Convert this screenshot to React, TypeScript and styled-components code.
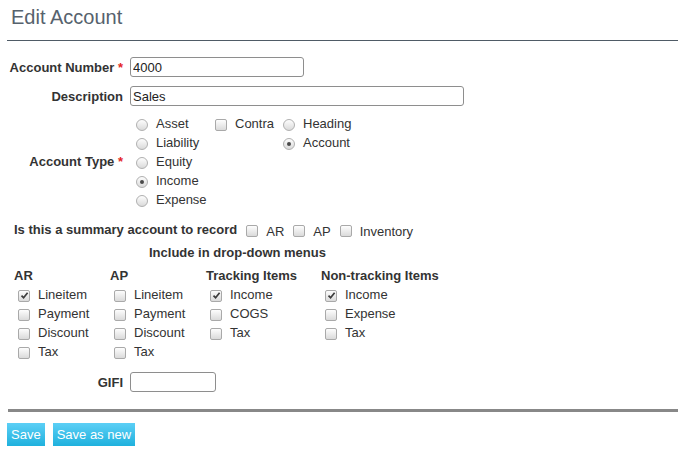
import React from "react";
import styled, { createGlobalStyle, css } from "styled-components";

const GlobalStyle = createGlobalStyle`
  body {
    margin: 0;
    font-family: "Liberation Sans", Arial, sans-serif;
    font-size: 13px;
    color: #333;
    background: #fff;
  }
`;

const Page = styled.div`
  width: 678px;
`;

const Header = styled.h1`
  box-sizing: border-box;
  height: 41px;
  margin: 0 0 0 7px;
  padding: 5px 0 0 4px;
  font-size: 20px;
  line-height: 24px;
  font-weight: normal;
  color: #56626d;
  border-bottom: 1px solid #4f5b66;
`;

const Form = styled.form`
  padding-top: 16px;
`;

const FieldRow = styled.div<{ $gap: number }>`
  display: grid;
  grid-template-columns: 123px auto;
  column-gap: 7px;
  align-items: center;
  margin-top: ${(p) => p.$gap}px;
`;

const Label = styled.label`
  font-weight: bold;
  text-align: right;
  white-space: nowrap;
`;

const Required = styled.span`
  color: #e4261f;
`;

const TextInput = styled.input<{ $width: number }>`
  box-sizing: border-box;
  width: ${(p) => p.$width}px;
  height: 20px;
  margin: 0;
  padding: 0 2px;
  border: 1px solid #8e8e8e;
  border-radius: 3px;
  font-family: inherit;
  font-size: 13px;
  color: #222;
  outline: none;
`;

const TypeGrid = styled.div`
  display: flex;
  align-items: flex-start;
`;

const TypeColumn = styled.div<{ $width: number; $indent: number }>`
  display: flex;
  flex-direction: column;
  width: ${(p) => p.$width}px;
  padding-left: ${(p) => p.$indent}px;
  box-sizing: border-box;
`;

const Option = styled.label<{ $drop?: boolean }>`
  display: flex;
  align-items: center;
  gap: 8px;
  height: 19px;
  white-space: nowrap;
  ${(p) =>
    p.$drop &&
    css`
      & > span:last-child {
        padding-top: 3px;
      }
    `}
`;

const control = css`
  box-sizing: border-box;
  flex: none;
  width: 12px;
  height: 12px;
  margin-top: 2px;
  border: 1px solid #b0b0b0;
  background: linear-gradient(#fdfdfd, #dadada);
  display: flex;
  align-items: center;
  justify-content: center;
`;

const Radio = styled.span<{ $checked?: boolean }>`
  ${control}
  border-radius: 50%;
  &::after {
    content: "";
    display: ${(p) => (p.$checked ? "block" : "none")};
    width: 4px;
    height: 4px;
    border-radius: 50%;
    background: #4a4a4a;
  }
`;

const Box = styled.span`
  ${control}
  border-radius: 2px;
  border-color: #a9a9a9;
`;

const Check = ({ checked }: { checked?: boolean }) => (
  <Box>
    {checked && (
      <svg width="9" height="9" viewBox="0 0 9 9">
        <path d="M1.5 4.6 L3.6 6.8 L7.6 1.8" fill="none" stroke="#3c3c3c" strokeWidth="1.7" />
      </svg>
    )}
  </Box>
);

const SummaryRow = styled.div`
  display: flex;
  align-items: center;
  height: 19px;
  margin: 4px 0 0 14px;
  gap: 9px;
`;

const Strong = styled.span`
  font-weight: bold;
`;

const Caption = styled.div`
  margin: 4px 0 0 149px;
  line-height: 19px;
  font-weight: bold;
`;

const MenuGrid = styled.div`
  display: grid;
  grid-template-columns: 96px 96px 115px auto;
  margin: 4px 0 0 14px;
`;

const MenuColumn = styled.div`
  display: flex;
  flex-direction: column;
`;

const MenuHead = styled.div`
  font-weight: bold;
  line-height: 19px;
`;

const MenuItems = styled.div`
  padding-left: 4px;
`;

const Rule = styled.hr`
  height: 3px;
  margin: 17px 0 0 8px;
  border: none;
  background: #888;
`;

const Buttons = styled.div`
  display: flex;
  gap: 8px;
  margin-top: 11px;
  padding-left: 7px;
`;

const Button = styled.button`
  height: 23px;
  padding: 0 4px;
  border: none;
  background: linear-gradient(#5ccff6, #1fb1dd);
  color: #fff;
  font-family: inherit;
  font-size: 13px;
`;

const menus = [
  { title: "AR", items: [["Lineitem", true], ["Payment"], ["Discount"], ["Tax"]] },
  { title: "AP", items: [["Lineitem"], ["Payment"], ["Discount"], ["Tax"]] },
  { title: "Tracking Items", items: [["Income", true], ["COGS"], ["Tax"]] },
  { title: "Non-tracking Items", items: [["Income", true], ["Expense"], ["Tax"]] },
] as { title: string; items: [string, boolean?][] }[];

const types = ["Asset", "Liability", "Equity", "Income", "Expense"];

export default function App() {
  return (
    <Page>
      <GlobalStyle />
      <Header>Edit Account</Header>
      <Form>
        <FieldRow $gap={0}>
          <Label>
            Account Number <Required>*</Required>
          </Label>
          <TextInput $width={174} defaultValue="4000" />
        </FieldRow>
        <FieldRow $gap={9}>
          <Label>Description</Label>
          <TextInput $width={334} defaultValue="Sales" />
        </FieldRow>
        <FieldRow $gap={8}>
          <Label>
            Account Type <Required>*</Required>
          </Label>
          <TypeGrid>
            <TypeColumn $width={79} $indent={6}>
              {types.map((t) => (
                <Option key={t}>
                  <Radio $checked={t === "Income"} />
                  <span>{t}</span>
                </Option>
              ))}
            </TypeColumn>
            <TypeColumn $width={73} $indent={6}>
              <Option>
                <Check />
                <span>Contra</span>
              </Option>
            </TypeColumn>
            <TypeColumn $width={120} $indent={1}>
              <Option>
                <Radio />
                <span>Heading</span>
              </Option>
              <Option>
                <Radio $checked />
                <span>Account</span>
              </Option>
            </TypeColumn>
          </TypeGrid>
        </FieldRow>
        <SummaryRow style={{ marginTop: 11 }}>
          <Strong>Is this a summary account to record</Strong>
          {["AR", "AP", "Inventory"].map((s) => (
            <Option key={s} $drop>
              <Check />
              <span>{s}</span>
            </Option>
          ))}
        </SummaryRow>
        <Caption>Include in drop-down menus</Caption>
        <MenuGrid>
          {menus.map((m) => (
            <MenuColumn key={m.title}>
              <MenuHead>{m.title}</MenuHead>
              <MenuItems>
                {m.items.map(([name, on]) => (
                  <Option key={name}>
                    <Check checked={on} />
                    <span>{name}</span>
                  </Option>
                ))}
              </MenuItems>
            </MenuColumn>
          ))}
        </MenuGrid>
        <FieldRow $gap={11}>
          <Label>GIFI</Label>
          <TextInput $width={86} />
        </FieldRow>
        <Rule />
        <Buttons>
          <Button type="button">Save</Button>
          <Button type="button">Save as new</Button>
        </Buttons>
      </Form>
    </Page>
  );
}
